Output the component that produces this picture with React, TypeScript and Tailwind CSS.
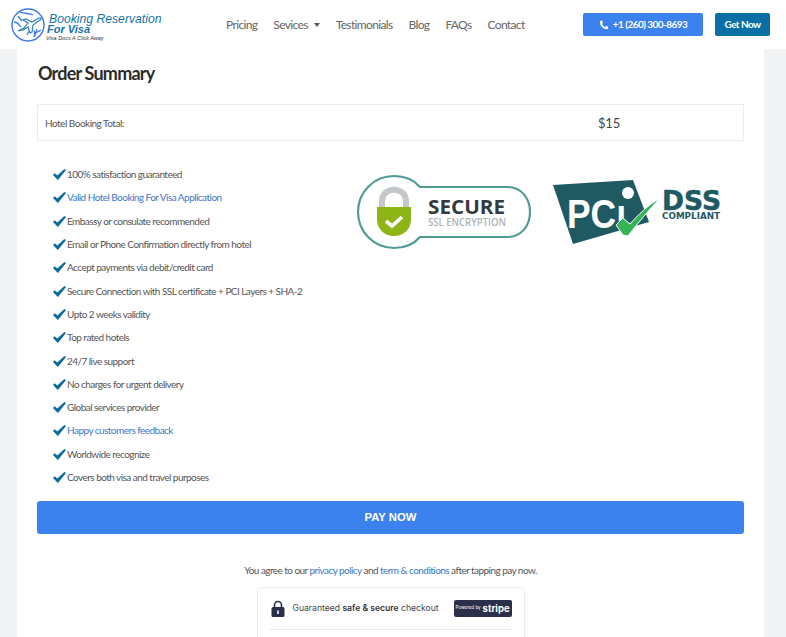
import { Phone } from 'lucide-react';

const navItems = ['Pricing', 'Sevices', 'Testimonials', 'Blog', 'FAQs', 'Contact'];

const features = [
  { text: '100% satisfaction guaranteed' },
  { text: 'Valid Hotel Booking For Visa Application', link: true },
  { text: 'Embassy or consulate recommended' },
  { text: 'Email or Phone Confirmation directly from hotel' },
  { text: 'Accept payments via debit/credit card' },
  { text: 'Secure Connection with SSL certificate + PCI Layers + SHA-2' },
  { text: 'Upto 2 weeks validity' },
  { text: 'Top rated hotels' },
  { text: '24/7 live support' },
  { text: 'No charges for urgent delivery' },
  { text: 'Global services provider' },
  { text: 'Happy customers feedback', link: true },
  { text: 'Worldwide recognize' },
  { text: 'Covers both visa and travel purposes' },
];

function Logo() {
  return (
    <div className="relative h-[36px] w-[160px] shrink-0">
      <svg width="36" height="36" viewBox="0 0 36 36" className="absolute -left-[1px] top-0" fill="none">
        <circle cx="18" cy="18" r="16" stroke="#3b78e7" strokeWidth="1.4" />
        <path d="M10 5c5 2 9 1 13 3M4 15c4 0 5 3 7 5M24 30c0-4 3-5 7-7M8 9l4 5" stroke="#3b78e7" strokeWidth="1.3" />
        <path d="M8 24l6-3 4-5-5-3 3-1 6 3 7-4c2-1 3 1 1 2l-7 5-1 7-2 1-2-6-5 3z" fill="#fff" stroke="#2f80b8" strokeWidth="1.2" />
        <path d="M17 28l2-4M24 23l1 5 2-6" stroke="#3b78e7" strokeWidth="1.2" />
      </svg>
      <span className="absolute left-[38px] top-[4px] whitespace-nowrap font-['Liberation_Sans'] text-[12.2px] leading-[16px] italic font-medium text-[#1573a8]">
        Booking Reservation
      </span>
      <span className="absolute left-[36px] top-[16px] whitespace-nowrap font-['Liberation_Sans'] text-[11px] leading-[12px] font-bold italic text-[#1573a8]">
        For Visa
      </span>
      <span className="absolute left-[35px] top-[28px] whitespace-nowrap font-['Liberation_Sans'] text-[5.5px] leading-[7px] italic text-[#333]">
        Visa Docs A Click Away
      </span>
    </div>
  );
}

function SecureBadge() {
  return (
    <svg width="178" height="76" viewBox="-1 -1 178 76" fill="none">
      <path
        d="M37 1c11 0 20 4 26 11h88c12 0 22 10 22 25s-10 25-22 25H63c-6 7-15 11-26 11C17 73 1 57 1 37S17 1 37 1z"
        stroke="#4f9c96"
        strokeWidth="2.2"
        fill="#fff"
      />
      <path d="M25 33V26c0-15 24-15 24 0v7" stroke="#c5c8cb" strokeWidth="6" />
      <path d="M20 32h34v12c0 10-7 17-17 17s-17-7-17-17z" fill="#8db516" />
      <path d="M29 46l6 5 10-9" stroke="#fff" strokeWidth="3.6" />
      <text x="71" y="39" fontFamily="Open Sans, sans-serif" fontWeight="700" fontSize="20" fill="#333a3f" textLength="77" lengthAdjust="spacingAndGlyphs">
        SECURE
      </text>
      <text x="71" y="51" fontFamily="Open Sans, sans-serif" fontWeight="600" fontSize="10" fill="#aeb2b5" textLength="78" lengthAdjust="spacingAndGlyphs">
        SSL ENCRYPTION
      </text>
    </svg>
  );
}

function PciBadge() {
  return (
    <svg width="172" height="68" viewBox="0 0 172 68" fill="none">
      <path d="M1 5l80-5 16 42-76 22z" fill="#1f5a63" />
      <text x="15" y="48" fontFamily="Liberation Sans, sans-serif" fontWeight="700" fontSize="40" fill="#fff" textLength="59" lengthAdjust="spacingAndGlyphs">
        PCı
      </text>
      <circle cx="76" cy="13" r="6" fill="#fff" />
      <path d="M64 45l7-7 7 6c8-9 18-19 30-26-11 12-23 26-32 38l-5-1z" fill="#35b558" stroke="#fff" strokeWidth="1" />
      <text x="110" y="30" fontFamily="DejaVu Sans, sans-serif" fontWeight="700" fontSize="26" fill="#1f5a63" stroke="#1f5a63" strokeWidth="0.5" textLength="59" lengthAdjust="spacingAndGlyphs">
        DSS
      </text>
      <text x="110" y="39" fontFamily="DejaVu Sans, sans-serif" fontWeight="700" fontSize="8.2" fill="#1f5a63" textLength="58" lengthAdjust="spacingAndGlyphs">
        COMPLIANT
      </text>
    </svg>
  );
}

function CheckMark() {
  return (
    <svg width="13" height="11" viewBox="0 0 12 10" preserveAspectRatio="none" className="shrink-0">
      <path d="M0 5.5L1.5 3.8 4 5.8 10.5 0 12 1 4.5 10z" fill="#0a6a9a" />
    </svg>
  );
}

export default function App() {
  return (
    <div className="h-[637px] w-[786px] overflow-hidden bg-[#f1f3f5] font-['Lato',sans-serif]">
      <header className="flex h-[49px] items-center bg-white pl-[11px] pr-[16px]">
        <Logo />
        <nav className="ml-[55px] flex items-center gap-[16px] text-[12px] tracking-[-0.65px] text-[#666]">
          {navItems.map((item) => (
            <span key={item} className="flex items-center gap-[6px]">
              {item}
              {item === 'Sevices' && <span className="h-0 w-0 border-x-[3.5px] border-t-[4px] border-x-transparent border-t-[#555]" />}
            </span>
          ))}
        </nav>
        <div className="ml-auto flex items-center gap-[12px] text-[10px] font-bold tracking-[-0.55px] text-white">
          <a className="flex h-[23px] w-[120px] items-center justify-center gap-[4px] rounded-[2px] bg-[#3b82ee]">
            <Phone size={10} fill="currentColor" strokeWidth={0} />
            +1 (260) 300-8693
          </a>
          <a className="flex h-[23px] w-[55px] items-center justify-center rounded-[2px] bg-[#0a6fa5]">Get Now</a>
        </div>
      </header>

      <div className="pl-[17px] pr-[22px]">
        <main className="h-[588px] bg-white px-[20px] pt-[12px]">
          <h2 className="pl-[1px] text-[18px] leading-[24px] font-bold tracking-[-0.8px] text-[#2b2b2b]">Order Summary</h2>

          <div className="mt-[19px] flex h-[37px] items-center border border-[#ececec] pl-[7px] pt-[2px] text-[10px] tracking-[-0.5px] text-[#555]">
            <span className="w-[553px]">Hotel Booking Total:</span>
            <span className="text-[13px] tracking-[-0.2px] text-[#444]">$15</span>
          </div>

          <div className="mt-[22px] flex">
            <ul className="w-[303px] pl-[16px] pt-[0.05px]">
              {features.map((f) => (
                <li key={f.text} className="flex h-[23.3px] items-center gap-[1px] text-[10px] tracking-[-0.54px] whitespace-nowrap">
                  <CheckMark />
                  <span className={f.link ? 'text-[#3b78c9]' : 'text-[#555]'}>{f.text}</span>
                </li>
              ))}
            </ul>
            <div className="ml-[16px] flex items-start">
              <div className="mt-[11px]">
                <SecureBadge />
              </div>
              <div className="ml-[18px] mt-[17px]">
                <PciBadge />
              </div>
            </div>
          </div>

          <button className="mt-[12px] block h-[33px] w-full rounded-[3px] bg-[#3b82ee] font-['Liberation_Sans',sans-serif] text-[11.3px] font-bold text-white">
            PAY NOW
          </button>

          <p className="mt-[29px] text-center text-[10px] leading-[14px] tracking-[-0.55px] text-[#555]">
            You agree to our <a className="text-[#3b78c9]">privacy policy</a> and{' '}
            <a className="text-[#3b78c9]">term &amp; conditions</a> after tapping pay now.
          </p>

          <div className="mx-auto mt-[10px] h-[80px] w-[268px] rounded-[5px] border border-[#ececec] px-[12px] font-['Inter',sans-serif]">
            <div className="flex h-[42px] items-center border-b border-[#e8e8e8]">
              <svg width="14" height="17" viewBox="0 0 14 17" className="ml-[1px] shrink-0" fill="none">
                <path d="M3.5 8V5a3.5 3.5 0 017 0v3" stroke="#2a2f4a" strokeWidth="1.6" />
                <rect x="0.5" y="7" width="13" height="10" rx="1.5" fill="#2a2f4a" />
                <rect x="6.2" y="10.5" width="1.6" height="3.5" fill="#fff" />
              </svg>
              <span className="ml-[8px] whitespace-nowrap text-[8.6px] text-[#444]">
                Guaranteed <b className="font-semibold text-[#333]">safe &amp; secure</b> checkout
              </span>
              <span className="ml-auto flex h-[17px] w-[58px] items-center justify-center gap-[2px] rounded-[2px] bg-[#2a2f4a] text-white">
                <span className="text-[4.5px]">Powered by</span>
                <span className="text-[9.5px] font-bold">stripe</span>
              </span>
            </div>
          </div>
        </main>
      </div>
    </div>
  );
}
